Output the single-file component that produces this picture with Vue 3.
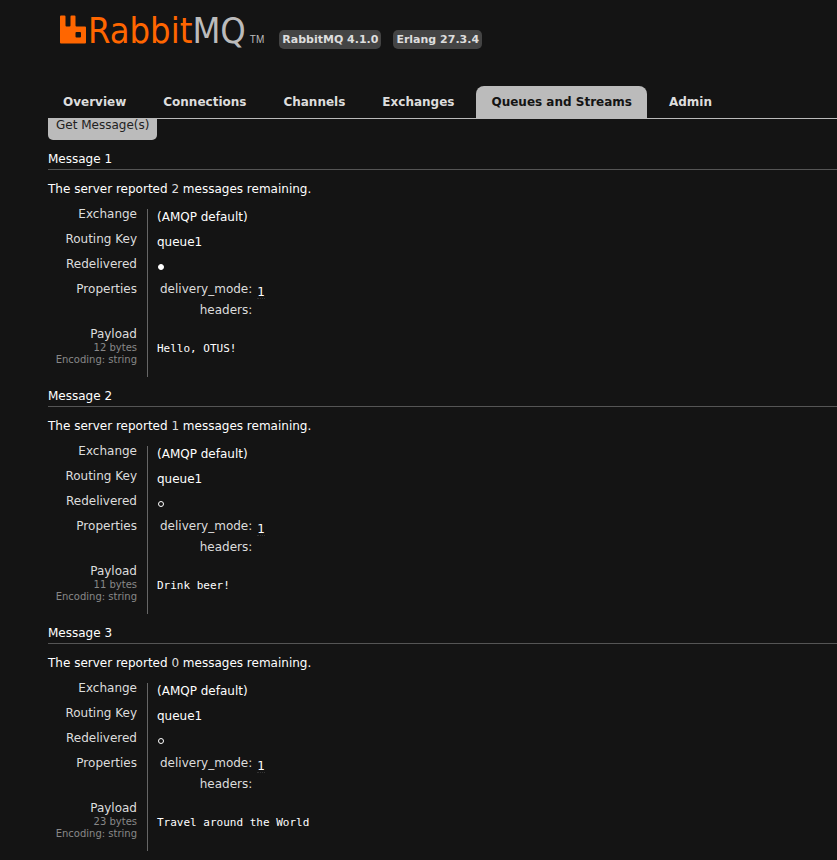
<script setup>
const tabs = ['Overview', 'Connections', 'Channels', 'Exchanges', 'Queues and Streams', 'Admin']
const activeTab = 'Queues and Streams'

const messages = [
  { id: 1, remaining: 2, redelivered: true, bytes: 12, payload: 'Hello, OTUS!' },
  { id: 2, remaining: 1, redelivered: false, bytes: 11, payload: 'Drink beer!' },
  { id: 3, remaining: 0, redelivered: false, bytes: 23, payload: 'Travel around the World' },
]
</script>

<template>
  <div class="page">
    <header>
      <div class="brand">
        <a class="logo" href="#/" aria-label="RabbitMQ">
          <svg class="mark" width="27" height="29" viewBox="0 0 27 29" aria-hidden="true">
            <path
              fill="#ff6600"
              fill-rule="evenodd"
              d="M1 0.5h3.500q1 0 1 1v9q0 1 1 1h3q1 0 1-1v-9q0-1 1-1h3q1 0 1 1v9q0 1 1 1h8.500q1 0 1 1v15q0 1-1 1H1q-1 0-1-1V1.500q0-1 1-1zM16.500 17q-1 0-1 1v3.500q0 1 1 1h3.500q1 0 1-1v-3.500q0-1-1-1z"
            />
          </svg>
          <span class="word"><span class="rabbit">Rabbit</span><span class="mq">MQ</span></span>
          <span class="tm">TM</span>
        </a>
        <span class="version">RabbitMQ 4.1.0</span>
        <span class="version">Erlang 27.3.4</span>
      </div>
      <nav>
        <a v-for="tab in tabs" :key="tab" href="#/" :class="{ active: tab === activeTab }">{{ tab }}</a>
      </nav>
    </header>

    <main>
      <button type="button" class="get">Get Message(s)</button>

      <section v-for="m in messages" :key="m.id" class="message">
        <h3>Message {{ m.id }}</h3>
        <p>The server reported <span class="count">{{ m.remaining }}</span> messages remaining.</p>
        <table class="facts">
          <tbody>
            <tr>
              <th scope="row">Exchange</th>
              <td>(AMQP default)</td>
            </tr>
            <tr>
              <th scope="row">Routing Key</th>
              <td>queue1</td>
            </tr>
            <tr>
              <th scope="row">Redelivered</th>
              <td><span class="dot" :class="{ filled: m.redelivered }"></span></td>
            </tr>
            <tr class="properties">
              <th scope="row">Properties</th>
              <td>
                <table class="inner">
                  <tbody>
                    <tr>
                      <th scope="row">delivery_mode:</th>
                      <td><abbr>1</abbr></td>
                    </tr>
                    <tr>
                      <th scope="row">headers:</th>
                      <td></td>
                    </tr>
                  </tbody>
                </table>
              </td>
            </tr>
            <tr class="payload">
              <th scope="row">
                Payload
                <span class="details">{{ m.bytes }} bytes<br />Encoding: string</span>
              </th>
              <td><pre>{{ m.payload }}</pre></td>
            </tr>
          </tbody>
        </table>
      </section>
    </main>
  </div>
</template>

<style>
body {
  margin: 0;
  background: #141414;
}
</style>

<style scoped>
.page {
  color: #fff;
  background: #141414;
  font: 12px/12px Verdana, "DejaVu Sans", sans-serif;
}

header {
  display: flex;
  flex-direction: column;
  gap: 36px;
  padding-left: 48px;
}

.brand {
  display: flex;
  align-items: flex-end;
  gap: 12px;
  height: 50px;
  padding-left: 12px;
}

.logo {
  display: flex;
  align-items: flex-end;
  height: 50px;
  margin-right: 3px;
  text-decoration: none;
}

.mark {
  margin-bottom: 6px;
}

.word {
  margin-left: 1px;
  font: 36px/38px "DejaVu Sans Condensed", "DejaVu Sans", sans-serif;
}

.rabbit {
  color: #f60;
}

.mq {
  color: #bbb;
}

.tm {
  margin: 0 0 4px 4px;
  color: #bbb;
  font: 10px/12px "Liberation Sans", sans-serif;
}

.version {
  margin-bottom: 1px;
  padding: 3px;
  border-radius: 5px;
  background: #444;
  color: #ddd;
  font: bold 11px/13px Verdana, "DejaVu Sans", sans-serif;
}

nav {
  display: flex;
  gap: 7px;
  border-bottom: 1px solid #bbb;
}

nav a {
  padding: 8px 15px;
  border-radius: 8px 8px 0 0;
  color: #ddd;
  font-weight: bold;
  line-height: 16px;
  text-decoration: none;
}

nav a.active {
  background: #bbb;
  color: #141414;
}

main {
  padding-left: 48px;
  overflow: hidden;
}

.get {
  display: block;
  margin: -8px 0 0;
  padding: 8px;
  border: 0;
  border-radius: 5px;
  background: #bbb;
  color: #222;
  font: inherit;
  line-height: 13px;
}

.message {
  padding-top: 13px;
}

h3 {
  margin: 0;
  padding-bottom: 3px;
  border-bottom: 1px solid #555;
  font-size: 12px;
  font-weight: normal;
  line-height: 13px;
}

p {
  margin: 0;
  padding: 13px 0;
  line-height: 13px;
}

.count {
  color: #ddd;
}

table {
  border-collapse: separate;
  border-spacing: 0;
}

th,
td {
  box-sizing: border-box;
  padding: 0;
  font-weight: normal;
  vertical-align: top;
}

.facts > tbody > tr {
  height: 25px;
}

.facts > tbody > tr > th {
  width: 100px;
  padding-right: 10px;
  border-right: 1px solid #666;
  color: #ddd;
  line-height: 11px;
  text-align: right;
}

.facts > tbody > tr > td {
  padding: 2px 0 0 9px;
}

.facts > tbody > .properties {
  height: 45px;
}

.facts > tbody > .properties > td {
  padding: 0 0 0 12px;
}

.facts > tbody > .payload {
  height: 48px;
}

.dot {
  display: block;
  box-sizing: border-box;
  width: 6px;
  height: 6px;
  margin: 3px 1px;
  border: 1px solid #fff;
  border-radius: 50%;
}

.filled {
  background: #fff;
}

.inner th {
  padding-right: 5px;
  color: #ddd;
  line-height: 11px;
  text-align: right;
}

.inner tr {
  height: 21px;
}

.inner td {
  padding-top: 2px;
}

abbr {
  display: block;
  border-bottom: 1px dotted #333;
}

.details {
  display: block;
  padding-top: 2px;
  color: #888;
  font-size: 10px;
  line-height: 12px;
}

pre {
  margin: 0;
  padding-top: 12px;
  font: 11px/12px "DejaVu Sans Mono", monospace;
}
</style>
